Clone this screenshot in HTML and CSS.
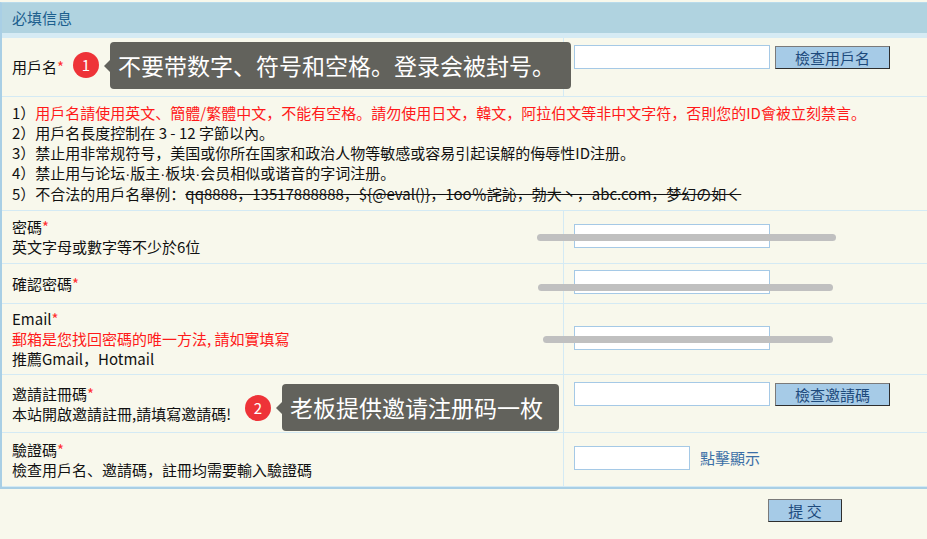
FILE: index.html
```html
<!DOCTYPE html>
<html>
<head>
  <meta charset="UTF-8">
  <meta name="viewport" content="width=device-width, initial-scale=1.0">
  <title>註冊</title>
  <link rel="stylesheet" href="styles.css">
</head>
<body>
  <div class="page">
    <div class="reg-box">
      <div class="box-head">必填信息</div>

      <div class="row row-user">
        <div class="row-label">
          <div>用戶名<span class="req">*</span></div>
        </div>
        <div class="row-field">
          <input type="text" class="txt">
          <button class="btn">檢查用戶名</button>
        </div>
      </div>

      <div class="row row-rules">
        <div class="rules">
          <div>1）<span class="warn">用戶名請使用英文、簡體/繁體中文，不能有空格。請勿使用日文，韓文，阿拉伯文等非中文字符，否則您的ID會被立刻禁言。</span></div>
          <div>2）用戶名長度控制在 3 - 12 字節以內。</div>
          <div>3）禁止用非常规符号，美国或你所在国家和政治人物等敏感或容易引起误解的侮辱性ID注册。</div>
          <div>4）禁止用与论坛<span class="dot">·</span>版主<span class="dot">·</span>板块<span class="dot">·</span>会员相似或谐音的字词注册。</div>
          <div>5）不合法的用戶名舉例：<span class="bad">qq8888，13517888888，${@eval()}，1oo％詫訫，勃大丶，abc.com，梦幻の如く</span></div>
        </div>
      </div>

      <div class="row row-pass">
        <div class="row-label">
          <div>密碼<span class="req">*</span></div>
          <div>英文字母或數字等不少於6位</div>
        </div>
        <div class="row-field field-low">
          <input type="password" class="txt">
        </div>
      </div>

      <div class="row row-confirm">
        <div class="row-label">
          <div>確認密碼<span class="req">*</span></div>
        </div>
        <div class="row-field field-tight">
          <input type="password" class="txt">
        </div>
      </div>

      <div class="row row-email">
        <div class="row-label">
          <div>Email<span class="req">*</span></div>
          <div class="warn">郵箱是您找回密碼的唯一方法, 請如實填寫</div>
          <div>推薦Gmail，Hotmail</div>
        </div>
        <div class="row-field field-lower">
          <input type="text" class="txt">
        </div>
      </div>

      <div class="row row-invite">
        <div class="row-label">
          <div>邀請註冊碼<span class="req">*</span></div>
          <div>本站開啟邀請註冊,請填寫邀請碼!</div>
        </div>
        <div class="row-field">
          <input type="text" class="txt">
          <button class="btn">檢查邀請碼</button>
        </div>
      </div>

      <div class="row row-code">
        <div class="row-label">
          <div>驗證碼<span class="req">*</span></div>
          <div>檢查用戶名、邀請碼，註冊均需要輸入驗證碼</div>
        </div>
        <div class="row-field field-low">
          <input type="text" class="txt txt-short">
          <a class="show-code" href="#">點擊顯示</a>
        </div>
      </div>
    </div>

    <div class="submit-bar">
      <button class="btn btn-submit">提 交</button>
    </div>

    <!-- annotations drawn over the form -->
    <div class="scribble scribble-1"></div>
    <div class="scribble scribble-2"></div>
    <div class="scribble scribble-3"></div>

    <div class="tip tip-1">
      <span class="badge">1</span>
      <div class="bubble">不要带数字、符号和空格。登录会被封号。</div>
    </div>
    <div class="tip tip-2">
      <span class="badge">2</span>
      <div class="bubble">老板提供邀请注册码一枚</div>
    </div>
  </div>
</body>
</html>
```

FILE: styles.css
```css
body {
  margin: 0;
  padding-top: 2px;
  background: #f8f8ec;
  font-family: "Noto Sans CJK SC", sans-serif;
  font-size: 15px;
  color: #111;
}

.page {
  position: relative;
}

.reg-box {
  border-left: 2px solid #a9cfe5;
  border-top: 1px solid #b9dbeb;
  border-bottom: 2px solid #a9cfe5;
}

.box-head {
  height: 30px;
  line-height: 30px;
  padding-left: 10px;
  background: #b0d3e0;
  border-bottom: 5px solid #d6ebf4;
  color: #1c5f8e;
}

.row {
  display: flex;
  box-sizing: border-box;
  border-bottom: 1px solid #d4eaf4;
  line-height: 20px;
}

.row-user { height: 59px; }
.row-rules { height: 114px; }
.row-pass { height: 53px; }
.row-confirm { height: 40px; }
.row-email { height: 71px; }
.row-invite { height: 58px; }
.row-code { height: 54px; }

.row-label {
  width: 551px;
  padding-left: 10px;
  border-right: 1px solid #d4eaf4;
  display: flex;
  flex-direction: column;
  justify-content: center;
}

.row-field {
  display: flex;
  align-items: flex-start;
  gap: 5px;
  padding: 7px 10px 0;
}

.field-tight { padding-top: 6px; }
.field-low { padding-top: 13px; }
.field-lower { padding-top: 22px; }

.rules {
  padding: 6px 10px 0;
}

.dot {
  font-family: "Liberation Sans", sans-serif;
}

.req {
  color: #ff3030;
}

.warn {
  color: #ff1a1a;
}

.bad {
  text-decoration: line-through;
}

.txt {
  box-sizing: border-box;
  width: 196px;
  height: 24px;
  margin: 0;
  border: 1px solid #a5c9e6;
  background: #fff;
}

.txt-short {
  width: 116px;
}

.btn {
  box-sizing: border-box;
  width: 115px;
  height: 23px;
  margin: 1px 0 0;
  padding: 0;
  background: #a6cbe7;
  border: 1px solid;
  border-color: #7a7a7a #2e2e2e #2e2e2e #7a7a7a;
  color: #1d4a7c;
  font-family: "Noto Sans CJK SC", sans-serif;
  font-size: 15px;
  line-height: 20px;
}

.show-code {
  margin-left: 5px;
  line-height: 24px;
  color: #3b6fa6;
  text-decoration: none;
}

.submit-bar {
  padding: 10px 0 0 768px;
}

.btn-submit {
  width: 74px;
  margin: 0;
}

.scribble {
  position: absolute;
  height: 7px;
  border-radius: 4px;
  background: #c0c0c0;
}

.scribble-1 { left: 537px; top: 232px; width: 299px; }
.scribble-2 { left: 538px; top: 282px; width: 295px; }
.scribble-3 { left: 543px; top: 334px; width: 290px; }

.tip {
  position: absolute;
  display: flex;
  align-items: center;
  gap: 11px;
}

.tip-1 { left: 73px; top: 40px; }
.tip-2 { left: 245px; top: 382px; }

.badge {
  width: 26px;
  height: 26px;
  border-radius: 50%;
  background: #ee3338;
  color: #fff;
  font-size: 15px;
  line-height: 26px;
  text-align: center;
  margin-top: -2px;
}

.tip-2 .badge {
  margin-top: 0;
}

.bubble {
  position: relative;
  height: 47px;
  line-height: 47px;
  padding: 0 16px 0 8px;
  border-radius: 4px;
  background: #62625c;
  color: #fff;
  font-size: 23px;
}

.bubble::before {
  content: "";
  position: absolute;
  left: -6px;
  top: 50%;
  margin-top: -6px;
  border-top: 6px solid transparent;
  border-bottom: 6px solid transparent;
  border-right: 6px solid #62625c;
}
```
